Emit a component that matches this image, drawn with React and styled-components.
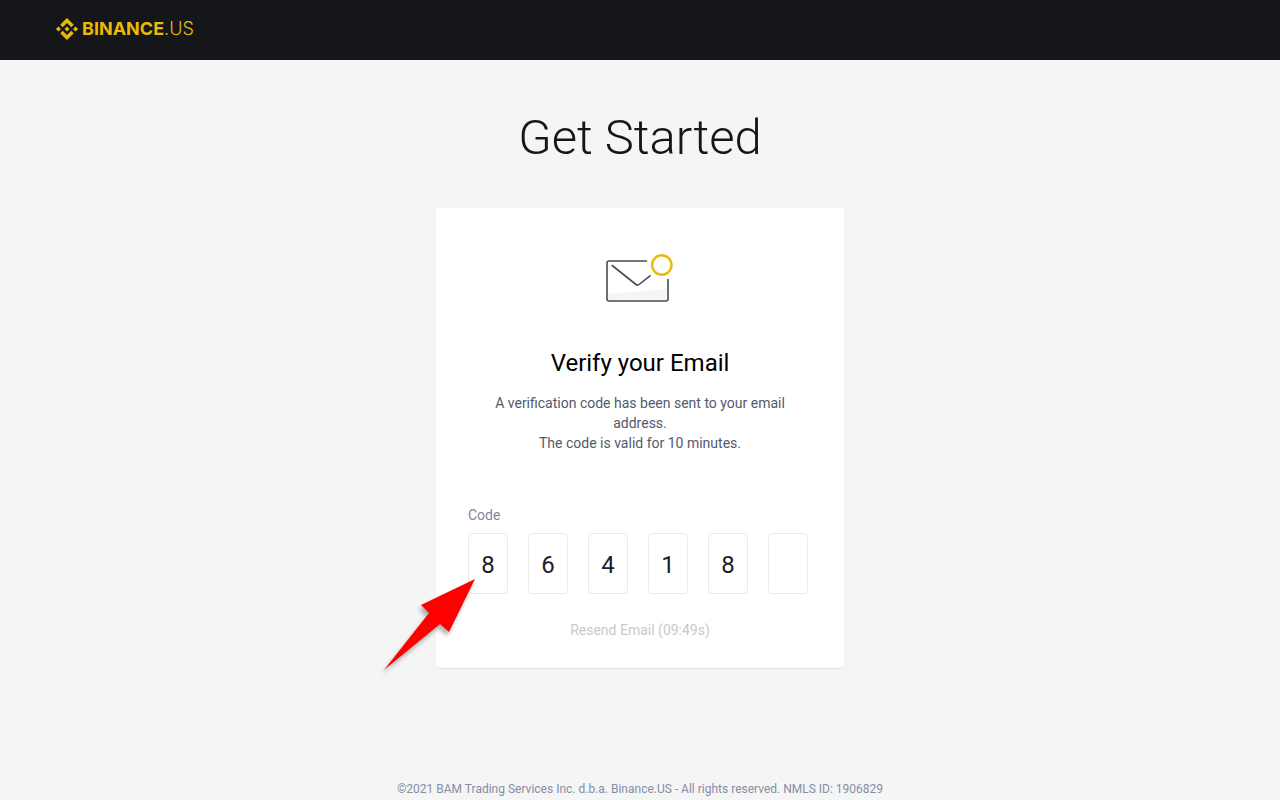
import { useState } from "react";
import styled, { createGlobalStyle } from "styled-components";

const COLORS = {
  brand: "#ebb90a",
  dark: "#15161a",
  page: "#f5f5f5",
  slate: "#535a6b",
  muted: "#7e8799",
  border: "#eaeaea",
};

const FONT = `"Roboto", "Noto Sans", sans-serif`;

const CODE = ["8", "6", "4", "1", "8", ""];

export default function App() {
  const [code, setCode] = useState(CODE);

  function handleChange(index, value) {
    setCode(code.map((digit, i) => (i === index ? value : digit)));
  }

  return (
    <Page>
      <GlobalStyle />
      <Header>
        <Logo href="#" aria-label="Binance.US">
          <LogoMark />
          <LogoText>
            BINANCE<LogoSuffix>.US</LogoSuffix>
          </LogoText>
        </Logo>
      </Header>

      <Main>
        <Title>Get Started</Title>
        <Card>
          <Envelope />
          <CardTitle>Verify your Email</CardTitle>
          <Description>
            A verification code has been sent to your email address.
            <br />
            The code is valid for 10 minutes.
          </Description>

          <Form>
            <Label htmlFor="code-0">Code</Label>
            <Digits>
              {code.map((digit, index) => (
                <Digit
                  key={index}
                  id={`code-${index}`}
                  aria-label={index > 0 ? `Code digit ${index + 1}` : undefined}
                  inputMode="numeric"
                  maxLength={1}
                  value={digit}
                  onChange={(event) => handleChange(index, event.target.value)}
                />
              ))}
              <Pointer />
            </Digits>
          </Form>
          <ResendButton type="button" disabled>
            Resend Email (09:49s)
          </ResendButton>
        </Card>
      </Main>

      <Footer>
        ©2021 BAM Trading Services Inc. d.b.a. Binance.US - All rights reserved.
        NMLS ID: 1906829
      </Footer>
    </Page>
  );
}

function LogoMark() {
  return (
    <svg width="22" height="22" viewBox="0 0 126.6 126.6" fill={COLORS.brand}>
      <path d="M38.7 53.2 63.3 28.6l24.6 24.6 14.3-14.3L63.3 0 24.4 38.9z" />
      <path d="M0 63.3 14.3 49l14.3 14.3-14.3 14.3z" />
      <path d="m38.7 73.4 24.6 24.6 24.6-24.6 14.3 14.3-38.9 38.9-38.9-38.9z" />
      <path d="M98 63.3 112.3 49l14.3 14.3-14.3 14.3z" />
      <path d="M48.8 63.3 63.3 48.8l14.5 14.5-14.5 14.5z" />
    </svg>
  );
}

function Envelope() {
  return (
    <EnvelopeIcon width="70" height="50" viewBox="0 0 70 50" fill="none">
      <path d="M3 42 62 37v11H3z" fill="#f5f5f5" />
      <g
        stroke="#474d57"
        strokeWidth="1.6"
        strokeLinecap="round"
        strokeLinejoin="round"
      >
        <path d="M41.5 9H4A2 2 0 0 0 2 11V47a2 2 0 0 0 2 2H61a2 2 0 0 0 2-2V27.5" />
        <path d="M7.2 13.5 31 32.5q1.5 1.2 3 0L45 23.8" />
      </g>
      <circle cx="56.8" cy="13" r="9.7" stroke={COLORS.brand} strokeWidth="2.4" />
    </EnvelopeIcon>
  );
}

function Pointer() {
  return (
    <PointerIcon width="92" height="92" viewBox="0 0 92 92" aria-hidden="true">
      <path d="M91 0 37 26 45 34 0 91 56 45 65 53z" fill="#ff0000" />
    </PointerIcon>
  );
}

const GlobalStyle = createGlobalStyle`
  *, *::before, *::after {
    box-sizing: border-box;
  }

  body {
    margin: 0;
    background-color: ${COLORS.page};
    font-family: ${FONT};
  }
`;

const Page = styled.div`
  min-height: 100vh;
  display: flex;
  flex-direction: column;
`;

const Header = styled.header`
  height: 60px;
  padding: 0 56px 3px;
  display: flex;
  align-items: center;
  background-color: ${COLORS.dark};
`;

const Logo = styled.a`
  display: flex;
  align-items: center;
  gap: 4px;
  color: ${COLORS.brand};
  text-decoration: none;
`;

const LogoText = styled.span`
  font-family: "Inter", sans-serif;
  font-size: 18px;
  line-height: 22px;
  font-weight: 700;
`;

const LogoSuffix = styled.span`
  font-weight: 300;
`;

const Main = styled.main`
  flex: 1;
  display: flex;
  flex-direction: column;
  align-items: center;
  padding: 48px 16px;
`;

const Title = styled.h1`
  margin: 0 0 40px;
  font-size: 49px;
  line-height: 60px;
  font-weight: 300;
  color: ${COLORS.dark};
`;

const Card = styled.section`
  width: 100%;
  max-width: 408px;
  padding: 44px 32px 28px;
  display: flex;
  flex-direction: column;
  align-items: center;
  background-color: #fff;
  border-radius: 4px;
  box-shadow: 0 1px 1px rgba(0, 0, 0, 0.08);
`;

const EnvelopeIcon = styled.svg`
  margin-bottom: 45px;
`;

const CardTitle = styled.h2`
  margin: 0 0 14px;
  font-size: 24px;
  line-height: 32px;
  font-weight: 400;
  color: #000;
`;

const Description = styled.p`
  margin: 0 0 52px;
  padding: 0 16px;
  font-size: 14px;
  line-height: 20px;
  text-align: center;
  color: ${COLORS.slate};
`;

const Form = styled.form`
  width: 100%;
`;

const Label = styled.label`
  display: block;
  margin-bottom: 8px;
  font-size: 14px;
  line-height: 20px;
  color: ${COLORS.muted};
`;

const Digits = styled.div`
  position: relative;
  max-width: 340px;
  display: flex;
  justify-content: space-between;
`;

const Digit = styled.input`
  width: 40px;
  height: 61px;
  padding: 2px 0 0;
  border: 1px solid ${COLORS.border};
  border-radius: 4px;
  background-color: #fff;
  font-family: inherit;
  font-size: 24px;
  text-align: center;
  color: #1e2026;
  outline: none;

  &:focus {
    border-color: ${COLORS.brand};
  }
`;

const PointerIcon = styled.svg`
  position: absolute;
  top: 46px;
  left: -84px;
  overflow: visible;
  pointer-events: none;
  filter: drop-shadow(-2px 4px 2px rgba(0, 0, 0, 0.3));
`;

const ResendButton = styled.button`
  margin-top: 26px;
  padding: 0;
  border: none;
  background: none;
  font-family: inherit;
  font-size: 14px;
  line-height: 20px;
  color: #c9c9c9;
`;

const Footer = styled.footer`
  padding: 0 16px 1px;
  font-size: 12px;
  line-height: 20px;
  text-align: center;
  color: #848ea5;
`;
